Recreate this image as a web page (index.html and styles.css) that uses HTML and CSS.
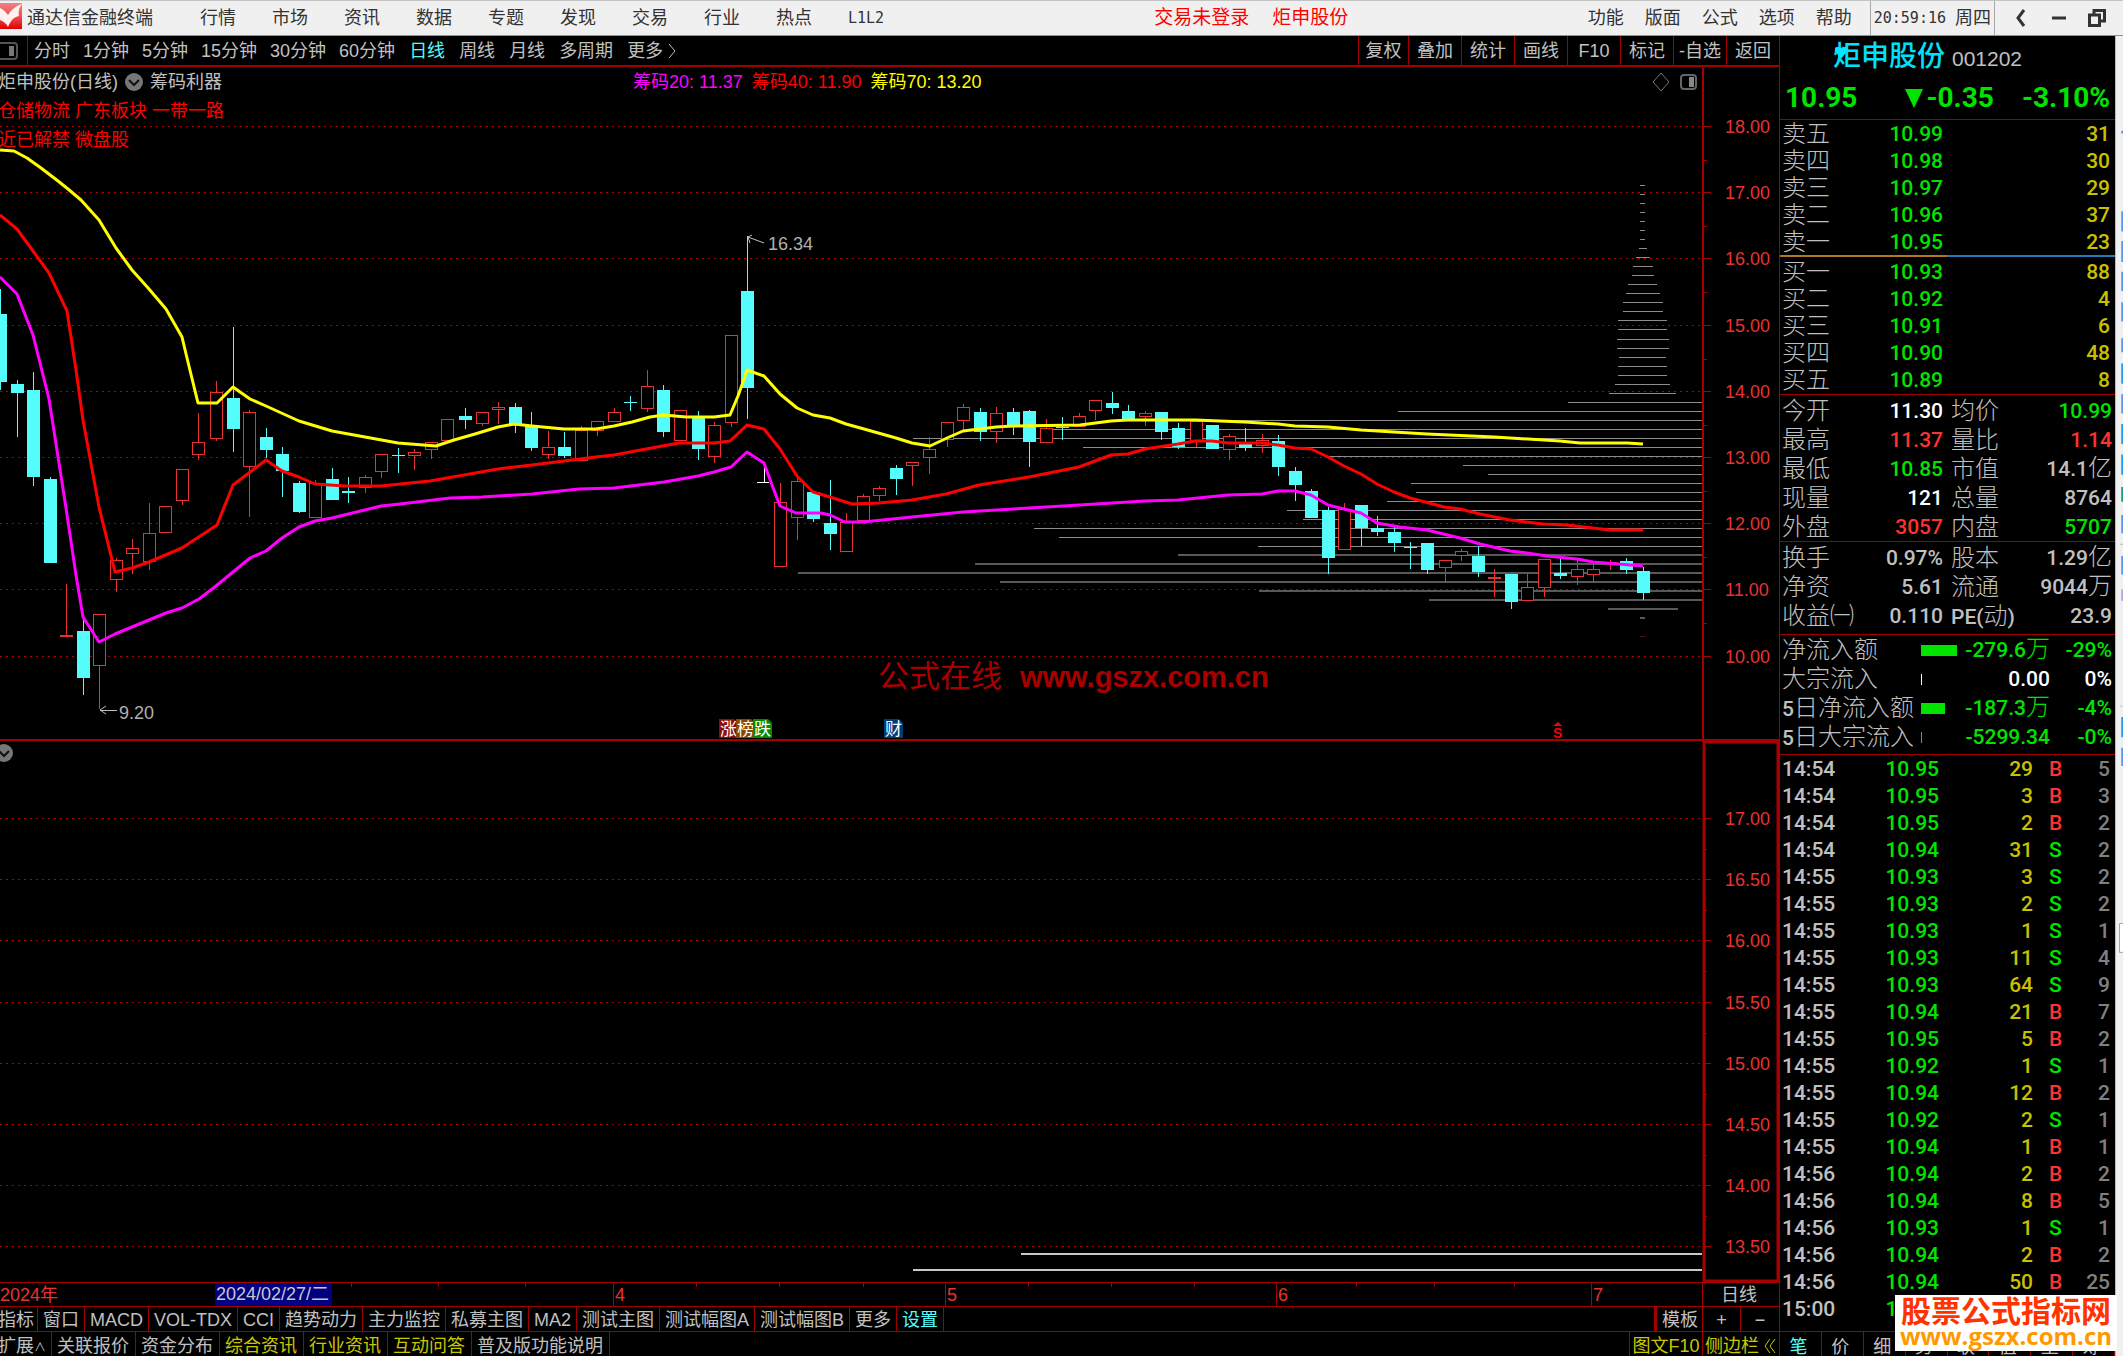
FILE: index.html
```html
<!DOCTYPE html>
<html lang="zh-CN">
<head>
<meta charset="utf-8">
<title>通达信金融终端</title>
<link rel="stylesheet" href="styles.css">
</head>
<body>
<header class="menubar">
  <svg class="logo" width="22" height="26" viewBox="0 0 22 26" aria-hidden="true">
    <defs><linearGradient id="lg" x1="0" y1="0" x2="0" y2="1"><stop offset="0" stop-color="#f28080"/><stop offset=".5" stop-color="#ee5050"/><stop offset="1" stop-color="#e00000"/></linearGradient></defs>
    <rect width="22" height="26" fill="url(#lg)"/>
    <path d="M0 5C4 7 6 9 8 12C11 7 16 3 22 1C19 5 18 8 19 13C14 14 11 17 8 24C6 20 3 18 0 17Z" fill="#fff" fill-opacity=".92"/>
  </svg>
  <h1 class="brand">通达信金融终端</h1>
  <nav class="menu">
    <a href="#">行情</a><a href="#">市场</a><a href="#">资讯</a><a href="#">数据</a><a href="#">专题</a><a href="#">发现</a><a href="#">交易</a><a href="#">行业</a><a href="#">热点</a><a href="#" class="mono">L1L2</a>
  </nav>
  <div class="alerts"><a href="#">交易未登录</a><a href="#">炬申股份</a></div>
  <nav class="tools"><a href="#">功能</a><a href="#">版面</a><a href="#">公式</a><a href="#">选项</a><a href="#">帮助</a></nav>
  <div class="clock"><span class="mono">20:59:16</span> 周四</div>
  <div class="winbtns">
    <button aria-label="后退"><svg width="18" height="20" viewBox="0 0 18 20"><path d="M12 2L6 10L12 18" fill="none" stroke="#333" stroke-width="3"/></svg></button>
    <button aria-label="最小化"><svg width="18" height="20" viewBox="0 0 18 20"><path d="M2 10H16" stroke="#333" stroke-width="3"/></svg></button>
    <button aria-label="还原"><svg width="18" height="20" viewBox="0 0 18 20"><path d="M6 6V2.500H16.500V13H12M1.500 7H11.500V17.500H1.500Z" fill="none" stroke="#333" stroke-width="3"/></svg></button>
  </div>
</header>
<div class="shell">
<main class="work">
  <div class="toolbar">
    <button class="side" aria-label="侧栏"><svg width="18" height="18" viewBox="0 0 18 18"><rect x="-4" y="1" width="21" height="16" rx="3" fill="none" stroke="#555" stroke-width="2"/><rect x="9" y="4" width="5" height="10" fill="#777"/></svg></button>
    <div class="periods mins"><button>分时</button><button>1分钟</button><button>5分钟</button><button>15分钟</button><button>30分钟</button><button>60分钟</button></div>
    <div class="periods"><button class="on">日线</button><button>周线</button><button>月线</button><button>多周期</button><button>更多<svg width="12" height="16" viewBox="0 0 12 16"><path d="M4 1L10 8L4 15" fill="none" stroke="#c0c0c0"/></svg></button></div>
    <div class="acts"><button>复权</button><button>叠加</button><button>统计</button><button>画线</button><button>F10</button><button>标记</button><button>-自选</button><button>返回</button></div>
  </div>
  <section class="pane">
    <svg id="main" class="plot" viewBox="0 68 1779 673" role="img" aria-label="日线K线图"></svg>
    <div class="overlay">
      <div class="titlerow">
        <span>炬申股份(日线)</span>
        <svg width="18" height="18" viewBox="0 0 18 18"><circle cx="9" cy="9" r="9" fill="#777"/><path d="M4 7L9 12L14 7" fill="none" stroke="#111" stroke-width="2"/></svg>
        <span>筹码利器</span>
      </div>
      <div class="legend"><span class="mg">筹码20: 11.37</span><span class="rd">筹码40: 11.90</span><span class="yl">筹码70: 13.20</span></div>
      <p class="tag">仓储物流 广东板块 一带一路</p>
      <p class="tag">近已解禁 微盘股</p>
    </div>
  </section>
  <svg id="sub" class="plot" viewBox="0 741 1779 541" role="img" aria-label="副图"></svg>
  <svg id="dates" class="plot" viewBox="0 1282 1779 24" role="img" aria-label="日期轴"></svg>
  <div class="tabs">
    <button class="first">指标</button><button>窗口</button><button>MACD</button><button>VOL-TDX</button><button>CCI</button><button>趋势动力</button><button>主力监控</button><button>私募主图</button><button>MA2</button><button>测试主图</button><button>测试幅图A</button><button>测试幅图B</button><button>更多</button><button class="on">设置</button>
    <div class="right"><button class="tpl">模板</button><button class="half">+</button><button class="half">−</button></div>
  </div>
  <div class="tabs bottom">
    <button class="first">扩展<small>∧</small></button><button>关联报价</button><button>资金分布</button><button class="yl">综合资讯</button><button class="yl">行业资讯</button><button class="yl">互动问答</button><button>普及版功能说明</button>
    <div class="right"><button class="yl f10">图文F10</button><button class="yl sidebtn">侧边栏<svg width="18" height="16" viewBox="0 0 18 16"><path d="M11 1L6 8L11 15M16 1L11 8L16 15" fill="none" stroke="#c8c800"/></svg></button></div>
  </div>
</main>
<aside class="quote">
  <div class="head">
    <div class="name"><svg class="heart" width="15" height="14" viewBox="0 0 15 14" aria-hidden="true"><path d="M7 14L1 6Q0 0 7 3Q14 0 14 5Z" fill="#00e8ff"/></svg><b>炬申股份</b><span>001202</span></div>
    <div class="last"><span>10.95</span><span class="chg"><i></i>-0.35</span><span>-3.10%</span></div>
  </div>
  <table class="book asks"><tbody>
    <tr><th>卖五</th><td>10.99</td><td>31</td></tr>
    <tr><th>卖四</th><td>10.98</td><td>30</td></tr>
    <tr><th>卖三</th><td>10.97</td><td>29</td></tr>
    <tr><th>卖二</th><td>10.96</td><td>37</td></tr>
    <tr><th>卖一</th><td>10.95</td><td>23</td></tr>
  </tbody></table>
  <div class="ratio"></div>
  <table class="book bids"><tbody>
    <tr><th>买一</th><td>10.93</td><td>88</td></tr>
    <tr><th>买二</th><td>10.92</td><td>4</td></tr>
    <tr><th>买三</th><td>10.91</td><td>6</td></tr>
    <tr><th>买四</th><td>10.90</td><td>48</td></tr>
    <tr><th>买五</th><td>10.89</td><td>8</td></tr>
  </tbody></table>
  <div class="block today">
  <table class="stats"><tbody>
    <tr><th>今开</th><td class="w">11.30</td><th>均价</th><td class="g">10.99</td></tr>
    <tr><th>最高</th><td class="r">11.37</td><th>量比</th><td class="r">1.14</td></tr>
    <tr><th>最低</th><td class="g">10.85</td><th>市值</th><td>14.1<u>亿</u></td></tr>
    <tr><th>现量</th><td class="w">121</td><th>总量</th><td>8764</td></tr>
    <tr><th>外盘</th><td class="r">3057</td><th>内盘</th><td class="g">5707</td></tr>
  </tbody></table>
  </div>
  <div class="block fin">
  <table class="stats"><tbody>
    <tr><th>换手</th><td>0.97%</td><th>股本</th><td>1.29<u>亿</u></td></tr>
    <tr><th>净资</th><td>5.61</td><th>流通</th><td>9044<u>万</u></td></tr>
    <tr><th>收益㈠</th><td>0.110</td><th><span class="num">PE(</span>动<span class="num">)</span></th><td>23.9</td></tr>
  </tbody></table>
  </div>
  <div class="block flow">
  <table class="flows"><tbody>
    <tr class="g"><th>净流入额</th><td><i class="bar" style="width:36px"></i></td><td>-279.6<u>万</u></td><td>-29%</td></tr>
    <tr class="w"><th>大宗流入</th><td><i class="bar" style="width:1px"></i></td><td>0.00</td><td>0%</td></tr>
    <tr class="g"><th><span class="num">5</span>日净流入额</th><td><i class="bar" style="width:24px"></i></td><td>-187.3<u>万</u></td><td>-4%</td></tr>
    <tr class="g"><th><span class="num">5</span>日大宗流入</th><td><i class="bar" style="width:1px"></i></td><td>-5299.34</td><td>-0%</td></tr>
  </tbody></table>
  </div>
  <div class="block deals">
  <table class="ticks"><tbody>
    <tr><td>14:54</td><td>10.95</td><td>29</td><td class="r">B</td><td>5</td></tr>
    <tr><td>14:54</td><td>10.95</td><td>3</td><td class="r">B</td><td>3</td></tr>
    <tr><td>14:54</td><td>10.95</td><td>2</td><td class="r">B</td><td>2</td></tr>
    <tr><td>14:54</td><td>10.94</td><td>31</td><td class="g">S</td><td>2</td></tr>
    <tr><td>14:55</td><td>10.93</td><td>3</td><td class="g">S</td><td>2</td></tr>
    <tr><td>14:55</td><td>10.93</td><td>2</td><td class="g">S</td><td>2</td></tr>
    <tr><td>14:55</td><td>10.93</td><td>1</td><td class="g">S</td><td>1</td></tr>
    <tr><td>14:55</td><td>10.93</td><td>11</td><td class="g">S</td><td>4</td></tr>
    <tr><td>14:55</td><td>10.93</td><td>64</td><td class="g">S</td><td>9</td></tr>
    <tr><td>14:55</td><td>10.94</td><td>21</td><td class="r">B</td><td>7</td></tr>
    <tr><td>14:55</td><td>10.95</td><td>5</td><td class="r">B</td><td>2</td></tr>
    <tr><td>14:55</td><td>10.92</td><td>1</td><td class="g">S</td><td>1</td></tr>
    <tr><td>14:55</td><td>10.94</td><td>12</td><td class="r">B</td><td>2</td></tr>
    <tr><td>14:55</td><td>10.92</td><td>2</td><td class="g">S</td><td>1</td></tr>
    <tr><td>14:55</td><td>10.94</td><td>1</td><td class="r">B</td><td>1</td></tr>
    <tr><td>14:56</td><td>10.94</td><td>2</td><td class="r">B</td><td>2</td></tr>
    <tr><td>14:56</td><td>10.94</td><td>8</td><td class="r">B</td><td>5</td></tr>
    <tr><td>14:56</td><td>10.93</td><td>1</td><td class="g">S</td><td>1</td></tr>
    <tr><td>14:56</td><td>10.94</td><td>2</td><td class="r">B</td><td>2</td></tr>
    <tr><td>14:56</td><td>10.94</td><td>50</td><td class="r">B</td><td>25</td></tr>
    <tr><td>15:00</td><td>10.95</td><td></td><td></td><td></td></tr>
  </tbody></table>
  </div>
  <div class="qtabs"><button class="on">笔</button><button>价</button><button>细</button><button>势</button><button>联</button><button>值</button><button>主</button><button>筹</button></div>
  <div class="stamp"><b>股票公式指标网</b><span>www.gszx.com.cn</span></div>
</aside>
<svg class="edge" viewBox="0 36 8 1320" width="8" height="1320" aria-hidden="true">
  <path fill="#5a96f0" d="M6 50h2v3h-2zM6 142h2v23h-2zM6 176h2v24h-2zM6 211h2v22h-2zM6 246h2v22h-2zM6 287h2v16h-2zM6 351h2v22h-2zM6 489h2v21h-2zM6 536h2v21h-2zM6 755h2v21h-2z"/>
  <path fill="#1e9cf5" d="M6 316h2v23h-2zM6 385h2v23h-2zM6 420h2v23h-2zM6 720h2v23h-2z"/>
  <path d="M6 457h2v17h-2z" fill="#1a9a8a"/><path d="M6 574h2v13h-2z" fill="#c0a0e0"/>
  <path d="M5 522h3v1h-3zM5 707h3v1h-3z" fill="#aaa"/>
  <path d="M8 956H4V989H8" fill="#fff" stroke="#999"/>
</svg>
</div>
<script src="chart.js"></script>
</body>
</html>
```
FILE: styles.css
```css
* { box-sizing: border-box; }
body {
  margin: 0;
  min-height: 100vh;
  background: #000;
  color: #c0c0c0;
  font: 18px/24px "Liberation Sans", "Noto Sans CJK SC", sans-serif;
  overflow-x: hidden;
}
button {
  margin: 0;
  padding: 0;
  border: 0;
  background: none;
  color: inherit;
  font: inherit;
  white-space: nowrap;
}
a { color: inherit; text-decoration: none; }
p, h1 { margin: 0; font-weight: 400; }
.mono { font-family: "DejaVu Sans Mono", monospace; font-size: 15px; }

.menubar {
  display: flex;
  align-items: center;
  height: 36px;
  padding-bottom: 1px;
  background: #f0f0f0;
  color: #333;
  border-top: 1px solid #c4c4c4;
  border-bottom: 1px solid #909090;
  white-space: nowrap;
}
.logo { margin-top: -3px; }
.brand { margin-left: 5px; font-size: 18px; }
.menu { display: flex; gap: 36px; margin-left: 47px; }
.alerts { display: flex; gap: 23px; margin: 0 auto 0 270px; color: #f00; font-size: 19px; }
.tools { display: flex; gap: 21px; }
.clock {
  display: flex;
  align-items: center;
  gap: 9px;
  height: 34px;
  margin-left: 18px;
  padding: 0 3px;
  border: solid #a8a8a8;
  border-width: 0 1px;
}
.winbtns { display: flex; gap: 20px; padding: 0 17px; }
.winbtns svg { display: block; }

.shell {
  display: grid;
  grid-template-columns: minmax(0, 1fr) 336px 8px;
}
.edge { background: #f0f0f0; border-left: 1px solid #bbb; }

.toolbar {
  display: flex;
  height: 31px;
  border-bottom: 2px solid #a00000;
}
.toolbar button { padding-top: 1px; }
.side { width: 28px; border-right: 1px solid #a00000; text-align: left; }
.side svg { display: block; }
.periods { display: flex; gap: 14px; padding-left: 14px; }
.mins { gap: 13px; padding-left: 6px; }
.periods svg { vertical-align: -2px; margin-left: 2px; }
.on { color: #54fcfc; }
.acts {
  display: grid;
  grid-template-columns: 50px repeat(7, 1fr);
  width: 421px;
  margin-left: auto;
}
.acts button { border-left: 1px solid #a00000; }

.pane { position: relative; margin-top: 1px; }
.plot { display: block; width: 100%; height: auto; }
.overlay {
  position: absolute;
  inset: 0 0 auto 0;
  padding-top: 2px;
}
.titlerow { display: flex; align-items: center; gap: 7px; margin-left: -2px; }
.legend { position: absolute; left: 633px; top: 2px; display: flex; gap: 9px; white-space: pre; }
.tag { margin: 5px 0 0 -2px; color: #f00; }
.mg { color: #f0f; }
.rd { color: #f00; }
.yl { color: #c8c800; }
.legend .yl { color: #ff0; }

.tabs {
  display: flex;
  height: 25px;
  border-top: 1px solid #a00000;
  overflow: hidden;
}
.tabs button {
  height: 25px;
  padding: 0 5px;
  border-right: 1px solid #a00000;
}
.tabs .first { margin-left: -2px; padding: 0 3px 0 0; }
.tabs small { font-size: 12px; }
.right { display: flex; margin-left: auto; }
.tabs .tpl { width: 49px; border-left: 3px solid #a00000; }
.tabs .half { width: 38px; }
.tabs .half:last-child { border-right: 0; }
.bottom button { line-height: 29px; padding: 0 6px 0 5px; }
.bottom .first { padding-right: 5px; }
.bottom .f10 { width: 74px; padding: 0; border-left: 1px solid #a00000; }
.bottom .sidebtn { width: 76px; padding: 0 0 0 2px; border-right: 0; text-align: left; }
.sidebtn svg { vertical-align: -2px; }

.quote {
  position: relative;
  display: flex;
  flex-direction: column;
  border-left: 1px solid #a00000;
  font-family: Roboto, "Noto Sans CJK SC", sans-serif;
  font-size: 21px;
  font-weight: 500;
}
.head { height: 83px; padding-top: 1px; }
.name {
  position: relative;
  display: flex;
  align-items: center;
  justify-content: center;
  gap: 7px;
  height: 39px;
  padding-right: 40px;
}
.name b { color: #00e0ff; font-size: 28px; font-weight: 500; }
.name span { padding-top: 5px; font: 400 21px "Liberation Sans", sans-serif; }
.heart { position: absolute; left: 54px; top: 8px; }
.last {
  display: flex;
  justify-content: space-between;
  padding: 10px 5px 0 5px;
  color: #00e400;
  font-size: 28px;
  font-weight: 700;
}
.chg { display: flex; align-items: center; gap: 3px; margin-left: 20px; }
.chg i { border: solid transparent; border-width: 19px 9px 0 9px; border-top-color: #00e400; }

table { width: 100%; table-layout: fixed; border-collapse: collapse; }
td, th { height: 27px; padding: 2px 0 0; line-height: 25px; text-align: right; white-space: nowrap; }
th { font-size: 24px; font-weight: 300; text-align: left; padding-left: 2px; }
u { font-size: 24px; font-weight: 300; line-height: 20px; text-decoration: none; }
.num { font-size: 21px; font-weight: 500; }
.g { color: #00e400; }
.r { color: #ff3232; }
.w { color: #fff; }
.w th, .g th { color: #c0c0c0; }
.asks { border-top: 1px solid #a00000; }
.ratio { height: 2px; background: linear-gradient(90deg, #b07820 50%, #2878b8 50%); }
.bids { margin: 1px 0; }
.book th { width: 80px; }
.book td:nth-child(2) { width: 83px; color: #00e400; }
.book td:last-child { padding-right: 5px; color: #c8c000; }
.block { border-top: 1px solid #a00000; }
.today { padding-top: 1px; }
.fin { padding: 1px 0 4px; }
.flow { padding-bottom: 3px; }
.stats td, .stats th, .flows td, .flows th { height: 29px; }
.stats th:first-child { width: 80px; }
.stats td:nth-child(2) { width: 83px; }
.stats th:nth-child(3) { width: 75px; padding-left: 8px; }
.stats td:last-child, .flows td:last-child { padding-right: 3px; }
.flows th { width: 141px; }
.flows td:nth-child(2) { width: 37px; }
.flows td:nth-child(3) { width: 92px; }
.bar { display: block; height: 11px; background: currentColor; }
.ticks td:nth-child(1) { width: 80px; padding-left: 2px; text-align: left; }
.ticks td:nth-child(2) { width: 79px; color: #00e400; }
.ticks td:nth-child(3) { width: 94px; color: #c8c000; }
.ticks td:nth-child(4) { width: 44px; padding-left: 16px; text-align: left; }
.ticks td:nth-child(5) { padding-right: 5px; color: #808080; }
.deals { padding-bottom: 9px; }
.qtabs {
  display: grid;
  grid-template-columns: repeat(8, 1fr);
  height: 25px;
  border-top: 1px solid #a00000;
  overflow: hidden;
  font-size: 18px;
  font-weight: 400;
}
.qtabs button { height: 29px; line-height: 29px; padding-right: 4px; border-right: 1px solid #a00000; }
.stamp {
  position: absolute;
  right: -2px;
  bottom: 5px;
  width: 222px;
  height: 56px;
  background: #fff;
  text-align: center;
  font-family: "Open Sans", "Noto Sans CJK SC", sans-serif;
}
.stamp b { display: block; color: #ff3300; font-size: 30px; line-height: 32px; font-weight: 700; }
.stamp span { display: block; color: #ff9900; font-size: 24px; line-height: 18px; font-weight: 700; }
```
FILE: chart.js
```js
const NS = 'http://www.w3.org/2000/svg';
const RED = '#a80000', UP = '#e83232', DOWN = '#54fcfc';

function add(svg, tag, attrs, text) {
  const el = document.createElementNS(NS, tag);
  for (const k in attrs) el.setAttribute(k, attrs[k]);
  if (text) el.textContent = text;
  svg.appendChild(el);
  return el;
}
function line(svg, x1, y1, x2, y2, stroke, w, extra) {
  add(svg, 'line', Object.assign({ x1, y1, x2, y2, stroke, 'stroke-width': w || 1 }, extra));
}
function label(svg, x, y, text, fill, extra) {
  add(svg, 'text', Object.assign({ x, y, fill, 'font-size': 18 }, extra), text);
}

/* Horizontal dotted grid with the price scale on its right */
function scale(svg, first, step, count, value, dv, top, bottom) {
  for (let i = 0; i < count; i++) {
    const y = Math.round(first + step * i) + 0.5;
    line(svg, 0, y, 1703, y, '#b40000', 1, { 'stroke-dasharray': '2 4' });
    line(svg, 1703, y, 1711, y, RED, 1);
    const m = Math.round(y + step / 2) + 0.5;
    if (m < bottom) line(svg, 1703, m, 1707, m, RED, 1);
    label(svg, 1725, y + 6, (value - dv * i).toFixed(2), UP);
  }
}

/* x, body top, body bottom, high, low; a leading "u" marks a rising day */
const candles = `d0 314 382 289 390|d17 384 393 380 437|d33 390 477 372 486|d50 479 563 477 563|u66 635 637 584 637|d83 631 678 618 695|u99 614 666 614 709|u116 560 580 558 592|u132 548 554 539 574|u149 533 562 503 570|u165 506 533 506 533|u182 469 501 469 505|u198 442 455 413 460|u216 392 439 381 441|d233 398 429 327 452|u249 412 467 410 517|d266 437 450 428 458|d282 454 471 447 497|d299 483 512 481 513|u315 483 518 480 518|d332 479 500 468 500|d348 491 493 477 503|u365 477 488 475 493|u381 454 472 454 478|d398 455 456 448 473|u414 452 456 449 470|u431 442 450 442 459|u447 419 441 419 441|d465 416 420 408 429|u482 412 424 412 426|u498 407 410 402 424|d515 407 424 403 433|d531 426 448 412 451|u548 447 455 431 459|d564 447 456 432 458|u581 430 461 426 461|u597 421 431 421 436|u614 412 422 408 422|d630 402 403 396 411|u647 386 409 370 412|d663 390 432 385 437|u680 410 441 410 441|d698 416 449 411 460|u714 425 457 422 463|u731 335 423 335 427|d747 291 388 236 419|u780 502 567 483 567|u797 481 518 476 540|d813 492 519 492 522|d830 523 534 480 550|u846 522 552 513 552|u863 496 521 494 521|u879 488 496 486 501|d896 468 479 465 495|u912 462 466 462 486|u929 449 458 437 474|u947 422 440 422 447|u963 407 421 404 431|d980 412 432 408 441|u996 413 432 407 443|d1013 412 427 408 435|d1029 411 442 410 467|u1046 428 443 419 443|d1062 427 428 417 440|u1079 416 427 413 427|u1095 400 411 400 420|d1112 403 408 392 414|d1128 411 420 405 420|u1145 413 417 411 426|d1161 412 432 412 440|d1178 428 447 423 449|u1196 421 441 421 447|d1212 425 449 425 449|u1229 436 450 434 460|d1245 444 448 428 451|u1262 440 446 434 453|d1278 441 467 435 476|d1295 471 485 467 501|d1311 491 518 489 518|d1328 510 558 507 574|u1344 509 550 503 550|d1361 505 528 505 546|d1377 528 532 516 536|d1394 532 543 527 552|d1410 547 548 542 569|d1427 543 570 543 574|u1445 560 568 560 582|u1461 551 556 549 561|d1478 556 572 546 577|u1494 577 579 569 597|d1511 574 602 574 609|u1527 587 601 574 601|u1544 559 588 559 597|d1560 573 576 558 579|u1577 569 577 560 585|u1593 569 575 564 582|u1610 562 564 560 570|d1626 561 570 558 574|d1643 571 593 567 600`;

/* Distribution of holding cost: one [start, end] pair per price step, from the top down */
const chips = [[1640,1645],[1640,1645],[1640,1645],[1640,1645],[1640,1645],[1640,1645],[1640,1645],[1639,1647],[1636,1650],[1633,1653],[1632,1654],[1628,1657],[1626,1660],[1623,1663],[1623,1663],[1618,1667],[1618,1667],[1617,1669],[1617,1669],[1619,1666],[1618,1667],[1618,1667],[1615,1670],[1609,1676],1568,1398,1135,1050,913,1083,1328,1463,1488,1411,1416,1387,1287,1303,1034,1059,1258,1178,975,798,1000,1259,1429,[1608,1678],[1640,1645]];

const yellow = '0,150 14,151 27,158 41,168 58,181 68,189 81,200 99,220 116,248 132,270 149,289 166,309 182,337 187,358 198,403 217,403 233,387 250,399 266,406 299,421 332,431 365,437 398,443 436,446 454,440 475,434 498,427 514,424 532,426 564,429 596,429 614,426 632,422 650,417 664,415 686,417 714,417 730,415 738,396 743,382 747,370 764,376 780,394 797,408 813,415 830,418 846,424 864,429 896,438 912,443 930,446 947,438 963,431 996,427 1013,426 1080,425 1111,421 1128,420 1195,420 1245,422 1278,424 1295,426 1328,427 1361,430 1394,432 1427,434 1494,437 1560,441 1580,443 1627,443 1643,444';
const red = '0,215 17,229 33,251 49,273 67,311 76,370 83,420 99,507 115,572 132,568 149,562 182,548 217,525 233,485 266,460 282,471 299,477 315,484 345,486 381,486 430,481 464,475 498,469 532,465 564,461 596,457 614,455 646,449 679,443 714,443 730,441 747,425 764,429 780,449 797,476 813,492 830,497 852,504 879,503 912,500 946,494 979,485 1029,477 1079,467 1111,455 1128,454 1145,449 1178,444 1195,441 1212,441 1228,443 1262,443 1278,445 1295,448 1311,449 1328,457 1344,466 1361,474 1377,484 1394,492 1410,498 1444,507 1460,509 1480,514 1510,520 1543,524 1567,525 1610,530 1643,530';
const magenta = '0,277 17,294 33,335 49,399 66,508 76,575 83,617 99,642 115,634 166,613 182,608 199,599 216,586 233,572 250,558 266,551 282,538 299,527 315,521 332,518 381,506 400,504 450,498 482,497 532,494 579,489 614,488 664,482 698,476 714,472 731,467 747,452 764,463 772,485 780,506 796,513 821,513 830,515 845,522 863,522 912,517 963,512 1029,508 1063,506 1145,501 1178,500 1228,495 1262,494 1278,491 1295,491 1311,495 1328,505 1344,509 1361,513 1377,523 1400,527 1427,530 1460,538 1480,544 1510,551 1527,553 1547,556 1577,559 1593,562 1643,566';

const main = document.getElementById('main');
scale(main, 126, 66.2, 9, 18, 1, 68, 660);

chips.forEach((c, i) => {
  const [a, b] = Array.isArray(c) ? c : [c, 1703];
  const y = Math.round(185 + 9.03 * i);
  const low = i > 40;
  add(main, 'rect', { x: a, y: low ? y - 1 : y, width: b - a, height: low ? 2 : 1, fill: low ? '#585858' : '#8c8c8c' });
});
add(main, 'rect', { x: 1640, y: 636, width: 5, height: 1, fill: '#501030' });

candles.split('|').forEach(s => {
  const [x, t, b, h, l] = s.slice(1).split(' ').map(Number);
  if (s[0] === 'd') {
    add(main, 'rect', { x, y: h, width: 1, height: l - h, fill: DOWN });
    add(main, 'rect', { x: x - 6, y: t, width: 13, height: b - t, fill: DOWN });
  } else {
    if (h < t) add(main, 'rect', { x, y: h, width: 1, height: t - h, fill: UP });
    if (l > b) add(main, 'rect', { x, y: b, width: 1, height: l - b, fill: UP });
    add(main, 'rect', { x: x - 5.5, y: t + 0.5, width: 12, height: Math.max(b - t - 1, 1), fill: '#000', stroke: UP });
  }
});
add(main, 'path', { d: 'M764.5 467V482M757 482.500H769', stroke: '#fff', fill: 'none' });

[[magenta, '#f0f'], [red, '#f00'], [yellow, '#ff0']].forEach(([points, stroke]) =>
  add(main, 'polyline', { points, stroke, fill: 'none', 'stroke-width': 3, 'stroke-linejoin': 'round' }));

add(main, 'path', { d: 'M752 235L748 237L750 243M748 237L764 243M106 706L100 710L106 714M100 710.500H117', stroke: '#c0c0c0', fill: 'none' });
label(main, 768, 250, '16.34', '#b0b0b0');
label(main, 119, 719, '9.20', '#b0b0b0');
label(main, 878, 687, '公式在线', '#a80000', { 'font-size': 31 });
label(main, 1020, 687, 'www.gszx.com.cn', '#a80000', { 'font-size': 29, 'font-weight': 700 });

[[719, '涨', '#8b0c0c'], [736, '榜', '#8b4500'], [753, '跌', '#008b00'], [884, '财', '#003c78']].forEach(([x, t, fill]) => {
  add(main, 'path', { d: `M${x} 719H${x + 15}L${x + 19} 723V738H${x}Z`, fill });
  label(main, x + 1, 735, t, '#fff', { 'font-size': 17 });
});
add(main, 'path', { d: 'M1558 722L1562 726H1553Z', fill: '#f00' });
label(main, 1553, 738, 'S', '#f00', { 'font-size': 14, 'font-weight': 700 });

add(main, 'path', { d: 'M1661 73L1669 82L1661 91L1653 82Z', fill: 'none', stroke: '#777' });
add(main, 'rect', { x: 1681, y: 75, width: 15, height: 14, rx: 3, fill: 'none', stroke: '#666', 'stroke-width': 2 });
add(main, 'rect', { x: 1689, y: 77, width: 5, height: 10, fill: '#888' });
line(main, 1703, 68, 1703, 741, RED, 2);
line(main, 0, 740, 1779, 740, RED, 2);

const sub = document.getElementById('sub');
scale(sub, 818, 61.2, 8, 17, 0.5, 741, 1240);
line(sub, 1021, 1254, 1702, 1254, '#c8c8c8', 2);
line(sub, 913, 1270, 1702, 1270, '#c8c8c8', 2);
add(sub, 'rect', { x: 1704, y: 742, width: 74, height: 539, fill: 'none', stroke: RED, 'stroke-width': 3 });
add(sub, 'circle', { cx: 4, cy: 753, r: 9, fill: '#777' });
add(sub, 'path', { d: 'M-1 751L4 756L9 751', fill: 'none', stroke: '#111', 'stroke-width': 2 });

const dates = document.getElementById('dates');
line(dates, 0, 1282.5, 1779, 1282.5, RED, 1);
label(dates, 0, 1301, '2024年', UP);
add(dates, 'rect', { x: 215, y: 1283, width: 117, height: 23, fill: '#000080' });
label(dates, 216, 1300, '2024/02/27/二', '#c8c8c8');
[[613, '4'], [945, '5'], [1276, '6'], [1591, '7']].forEach(([x, t]) => {
  line(dates, x + 0.5, 1283, x + 0.5, 1306, RED, 1);
  label(dates, x + 2, 1301, t, UP);
});
[351, 438, 525, 696, 779, 863, 1028, 1111, 1194, 1356, 1434, 1514].forEach(x => line(dates, x + 0.5, 1283, x + 0.5, 1287, RED, 1));
line(dates, 1702.5, 1282, 1702.5, 1306, RED, 1);
label(dates, 1721, 1301, '日线', '#c0c0c0');
```
